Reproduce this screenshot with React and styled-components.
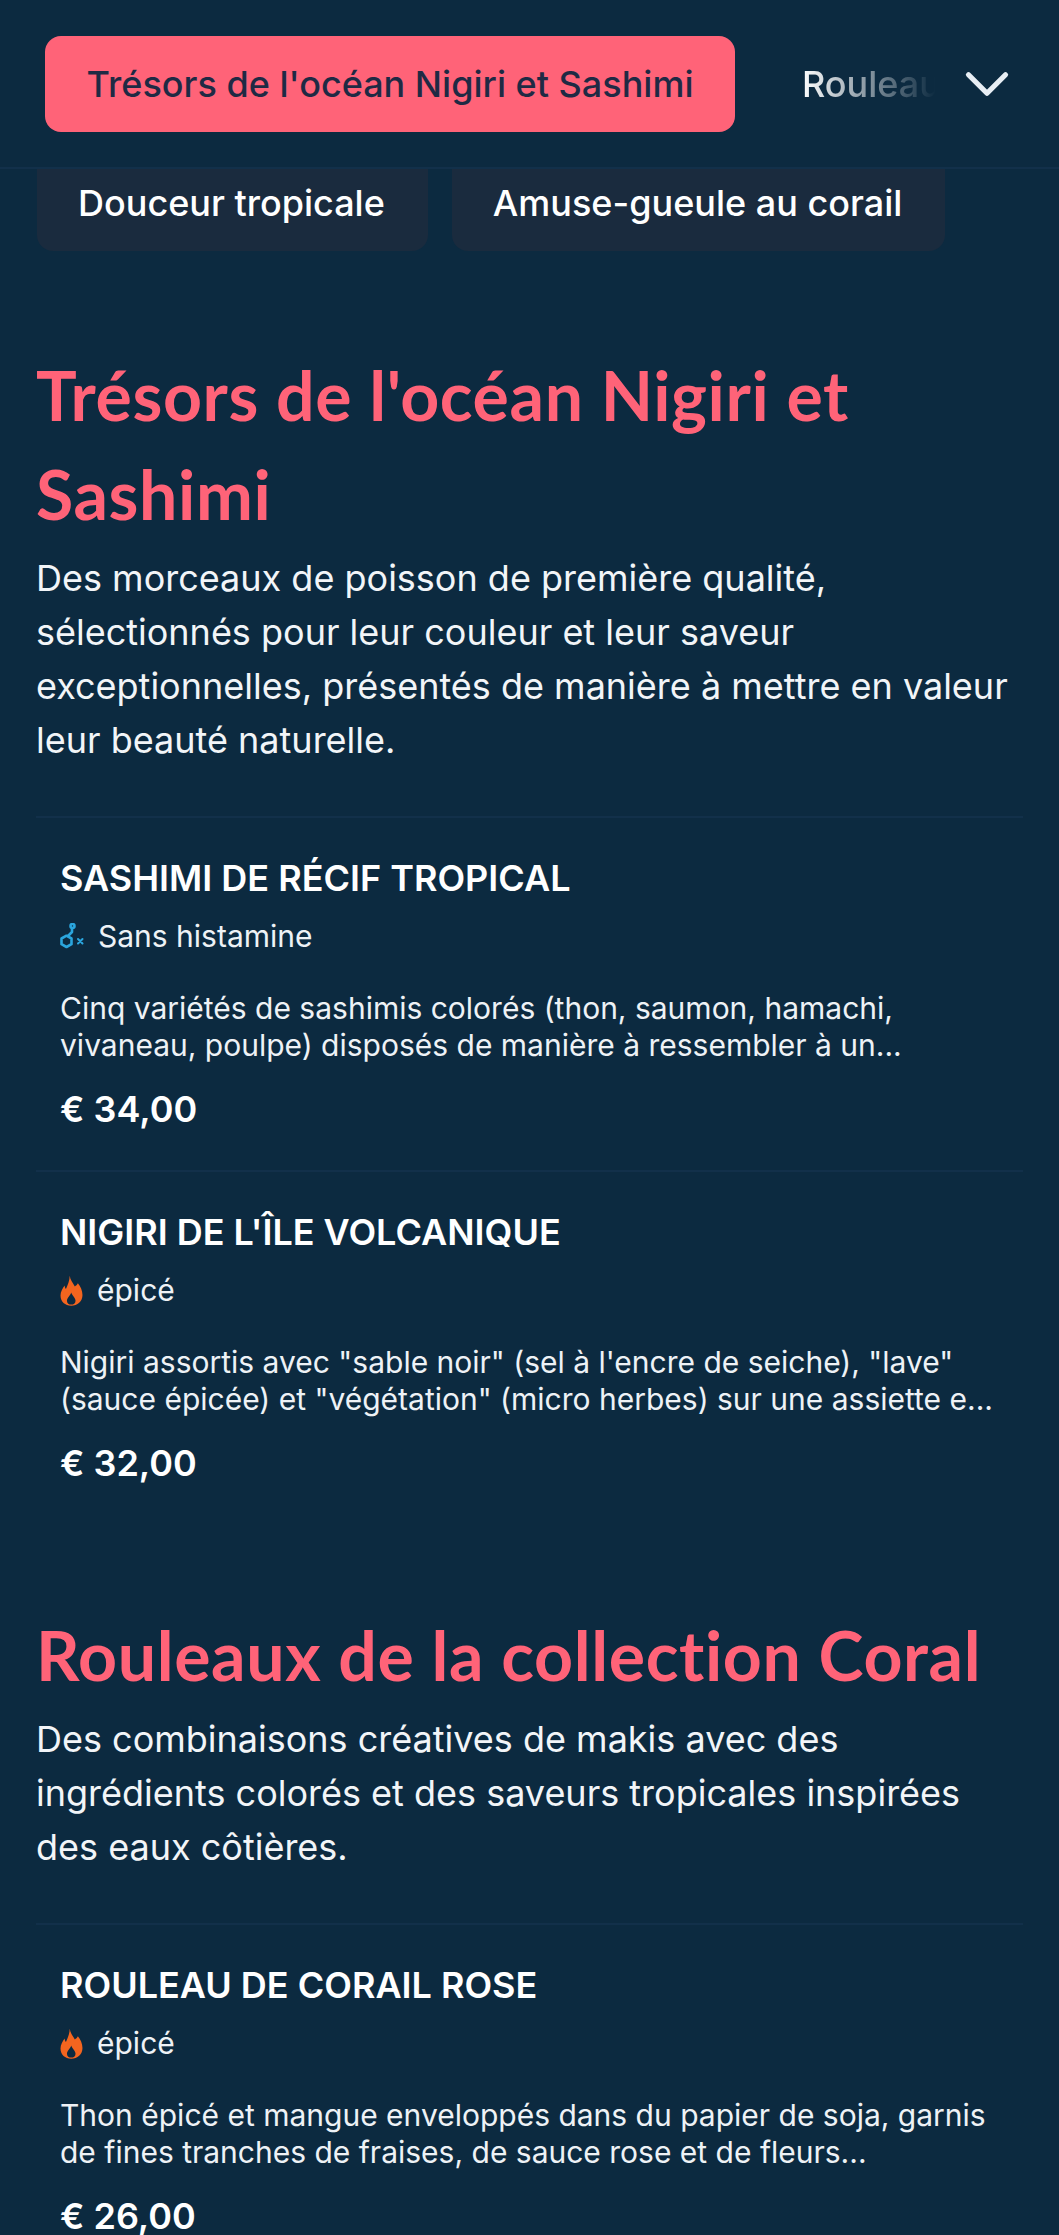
import React from 'react';
import styled, { createGlobalStyle } from 'styled-components';
import { ChevronDown } from 'lucide-react';

const Global = createGlobalStyle`
  html, body { margin: 0; padding: 0; background: #0c2a40; }
  body { font-family: Inter, "Liberation Sans", sans-serif; color: #fff; }
  #root { height: 2235px; overflow: hidden; }
  * { box-sizing: border-box; }
`;

const Page = styled.div`
  width: 1059px;
  background: #0c2a40;
`;
const Header = styled.header`
  height: 169px;
  padding: 36px 0 0 45px;
  display: flex;
  align-items: flex-start;
  border-bottom: 2px solid #12304a;
`;
const ActiveTab = styled.div`
  flex: none;
  width: 690px;
  height: 96px;
  border-radius: 16px;
  background: #ff6378;
  color: #1f2a44;
  font-size: 36px;
  font-weight: 500;
  display: flex;
  align-items: center;
  justify-content: center;
`;
const NextTab = styled.div`
  flex: none;
  margin-left: 67px;
  width: 134px;
  height: 96px;
  font-size: 36px;
  font-weight: 500;
  color: #fff;
  white-space: nowrap;
  overflow: hidden;
  display: flex;
  align-items: center;
  -webkit-mask-image: linear-gradient(to right, #000 0%, transparent 100%);
  mask-image: linear-gradient(to right, #000 0%, transparent 100%);
`;
const Toggle = styled.div`
  flex: none;
  margin-left: 14px;
  height: 96px;
  color: #e8eef4;
  display: flex;
  align-items: center;
`;
const SubTabs = styled.div`
  display: flex;
  gap: 24px;
  padding-left: 37px;
  height: 83px;
`;
const SubTab = styled.div`
  height: 82px;
  padding: 0 43px 14px 41px;
  border-radius: 0 0 16px 16px;
  background: #1a2b3e;
  font-size: 36px;
  font-weight: 500;
  display: flex;
  align-items: center;
`;
const Section = styled.section`
  padding: 0 36px;
  margin-bottom: 81px;
  &:first-of-type { margin-top: 93px; }
`;
const Heading = styled.h2`
  margin: 0 0 8px;
  font-family: Lato, sans-serif;
  font-size: 68px;
  line-height: 99px;
  font-weight: 700;
  letter-spacing: 0.6px;
  font-variant-ligatures: none;
  color: #ff6378;
`;
const Intro = styled.p`
  margin: 0 0 49px;
  font-size: 36px;
  line-height: 54px;
  color: #f2f5f8;
`;
const Item = styled.article`
  border-top: 2px solid #12304a;
  padding: 35px 24px 0;
  height: 354px;
`;
const Name = styled.h3`
  margin: 0;
  font-size: 36px;
  line-height: 50px;
  font-weight: 600;
  color: #fff;
`;
const Tag = styled.div`
  margin-top: 11px;
  height: 44px;
  display: flex;
  align-items: center;
  gap: 14px;
  font-size: 30px;
  color: #eef2f6;
`;
const Desc = styled.p`
  margin: 32px 0 0;
  font-size: 30px;
  line-height: 37px;
  color: #eef2f6;
`;
const Price = styled.div`
  margin-top: 20px;
  font-size: 36px;
  line-height: 50px;
  font-weight: 600;
`;

const Molecule = () => (
  <svg width="24" height="27" viewBox="0 0 24 27" fill="none" stroke="#2ba6de" strokeWidth="2.6" strokeLinecap="round" strokeLinejoin="round">
    <path d="M1.500 15.500l5-2.800 5 2.800v5.700l-5 2.800-5-2.800z" />
    <path d="M8 13l4-4V5" />
    <circle cx="12.500" cy="3" r="2" />
    <path d="M18 16l4.500 4.500M22.500 16l-4.500 4.500" strokeWidth="2" />
  </svg>
);

const Flame = () => (
  <svg width="23" height="31" viewBox="0 0 22.5 30">
    <path fill="#f4651f" fillRule="evenodd" d="M9.500.5C10 4.500 12.500 7.500 14.500 11c1-.5 2.300-1.500 3-3 2.500 3 4.500 7 4.500 11.500C22 26 17 30 11 30 5 30 .5 26 .5 20c0-4 2-7 4-10 .2 1.500.5 2.500 1.300 3.500C7.500 10 9.500 5 9.500.5zM11 17c-1 3-4.200 5.500-4.200 8 0 2.500 2 3.800 4.200 3.800s4.200-1.300 4.200-3.800c0-2.500-3.200-5-4.200-8z" />
  </svg>
);

const sections = [
  {
    title: "Trésors de l'océan Nigiri et Sashimi",
    intro: "Des morceaux de poisson de première qualité, sélectionnés pour leur couleur et leur saveur exceptionnelles, présentés de manière à mettre en valeur leur beauté naturelle.",
    items: [
      { name: 'SASHIMI DE RÉCIF TROPICAL', icon: <Molecule />, tag: 'Sans histamine', lines: ['Cinq variétés de sashimis colorés (thon, saumon, hamachi,', 'vivaneau, poulpe) disposés de manière à ressembler à un...'], price: '€ 34,00' },
      { name: "NIGIRI DE L'ÎLE VOLCANIQUE", icon: <Flame />, tag: 'épicé', lines: ['Nigiri assortis avec "sable noir" (sel à l\'encre de seiche), "lave"', '(sauce épicée) et "végétation" (micro herbes) sur une assiette e...'], price: '€ 32,00' },
    ],
  },
  {
    title: 'Rouleaux de la collection Coral',
    intro: 'Des combinaisons créatives de makis avec des ingrédients colorés et des saveurs tropicales inspirées des eaux côtières.',
    items: [
      { name: 'ROULEAU DE CORAIL ROSE', icon: <Flame />, tag: 'épicé', lines: ['Thon épicé et mangue enveloppés dans du papier de soja, garnis', 'de fines tranches de fraises, de sauce rose et de fleurs...'], price: '€ 26,00' },
    ],
  },
];

export default function App() {
  return (
    <Page>
      <Global />
      <Header>
        <ActiveTab>Trésors de l'océan Nigiri et Sashimi</ActiveTab>
        <NextTab>Rouleaux de la collection</NextTab>
        <Toggle><ChevronDown size={74} strokeWidth={1.7} /></Toggle>
      </Header>
      <SubTabs>
        <SubTab>Douceur tropicale</SubTab>
        <SubTab>Amuse-gueule au corail</SubTab>
      </SubTabs>
      {sections.map((s) => (
        <Section key={s.title}>
          <Heading>{s.title}</Heading>
          <Intro>{s.intro}</Intro>
          {s.items.map((it) => (
            <Item key={it.name}>
              <Name>{it.name}</Name>
              <Tag>{it.icon}{it.tag}</Tag>
              <Desc>{it.lines.map((l) => <React.Fragment key={l}>{l}<br /></React.Fragment>)}</Desc>
              <Price>{it.price}</Price>
            </Item>
          ))}
        </Section>
      ))}
    </Page>
  );
}
